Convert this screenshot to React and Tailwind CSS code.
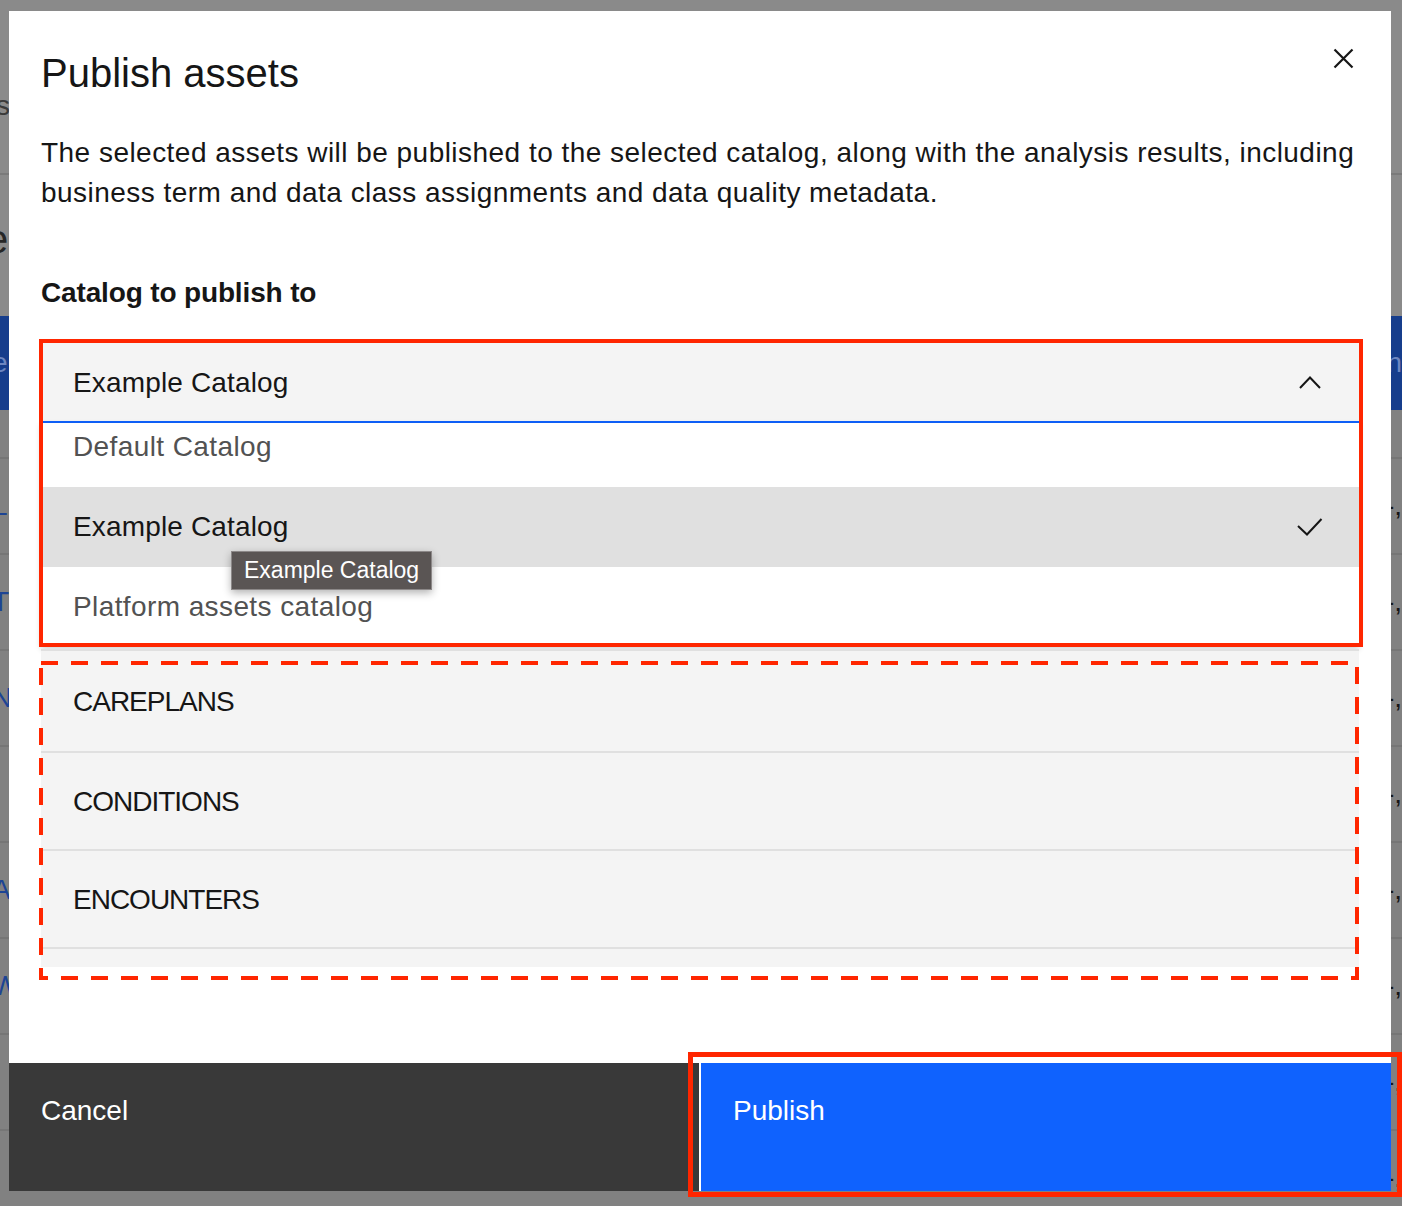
import React from "react";

function CloseIcon() {
  return (
    <svg width="21" height="21" viewBox="0 0 21 21" fill="none">
      <path d="M1.5 1.5L19.5 19.5M19.5 1.5L1.5 19.5" stroke="#161616" strokeWidth="2.2" />
    </svg>
  );
}

function ChevronUp() {
  return (
    <svg width="22" height="13" viewBox="0 0 22 13" fill="none">
      <polyline points="1,12 11,1.5 21,12" stroke="#161616" strokeWidth="2" fill="none" />
    </svg>
  );
}

function Check() {
  return (
    <svg width="26" height="18" viewBox="0 0 26 18" fill="none">
      <polyline points="1,8 10,16.5 24.5,1" stroke="#161616" strokeWidth="2" fill="none" />
    </svg>
  );
}

function Background() {
  const rows = ["L", "T", "N", "I", "A", "W", "I", "I"];
  return (
    <div className="flex flex-col">
      <div className="h-[175px] border-b-2 border-[#7a7a7a]">
        <div className="-ml-[4px] pt-[88px] text-[28px] leading-[36px] text-[#3a3a3a]">si</div>
      </div>
      <div className="h-[141px]">
        <div className="-ml-[14px] pt-[40px] text-[40px] leading-[48px] text-[#262626]">e</div>
      </div>
      <div className="flex h-[94px] items-center justify-between bg-[#163d8c] text-[28px]">
        <span className="-ml-[8px] text-[#6d86c0]">e</span>
        <span className="text-[#6d86c0]">n</span>
      </div>
      <div className="h-[49px] border-b-2 border-[#767676] bg-[#818181]" />
      {rows.map((r, i) => (
        <div
          key={i}
          className="flex h-[96px] items-center justify-between border-b-2 border-[#767676] bg-[#818181] text-[28px]"
        >
          <span className="-ml-[8px] text-[#1d4494]">{r}</span>
          <span className="text-[#161616]">-,</span>
        </div>
      ))}
    </div>
  );
}

export default function App() {
  return (
    <div className="relative h-[1206px] w-[1402px] overflow-hidden bg-[#8a8a8a] font-['Liberation_Sans',Arial,sans-serif]">
      <Background />

      <div className="absolute left-[9px] top-[11px] flex h-[1180px] w-[1382px] flex-col bg-white">
        <div className="relative px-[32px] pt-[38px]">
          <h1 className="text-[40px] leading-[48px] font-normal text-[#161616]">Publish assets</h1>
          <button className="absolute left-[1324px] top-[37px] flex">
            <CloseIcon />
          </button>
        </div>

        <p className="mt-[36px] px-[32px] text-[28px] leading-[40px] tracking-[0.47px] text-[#161616] whitespace-nowrap">
          The selected assets will be published to the selected catalog, along with the analysis results, including
          <br />
          business term and data class assignments and data quality metadata.
        </p>

        <div className="mt-[60px] px-[32px] text-[28px] leading-[40px] font-bold tracking-[-0.15px] text-[#161616]">
          Catalog to publish to
        </div>

        <div className="relative mx-[32px] mt-[28px]">
          <div className="flex h-[82px] items-center justify-between border-b-2 border-[#0f62fe] bg-[#f4f4f4] pl-[32px] pr-[38px] pt-[3px] text-[28px] tracking-[0.15px] text-[#161616]">
            <span>Example Catalog</span>
            <ChevronUp />
          </div>
          <div className="h-[224px] overflow-hidden bg-white shadow-[0_2px_6px_rgba(0,0,0,0.2)]">
            <div className="-mt-[16px] flex flex-col text-[28px] tracking-[0.4px]">
              <div className="flex h-[80px] items-center px-[32px] text-[#525252]">Default Catalog</div>
              <div className="flex h-[80px] items-center justify-between bg-[#e0e0e0] pl-[32px] pr-[36px] text-[#161616]">
                <span className="tracking-[0.15px]">Example Catalog</span>
                <Check />
              </div>
              <div className="flex h-[80px] items-center px-[32px] text-[#525252]">Platform assets catalog</div>
            </div>
          </div>

          <div className="absolute left-[190px] top-[210px] flex h-[39px] items-center border border-[#8c8888] bg-[#5a5554] px-[12px] text-[23px] text-white shadow-[0_3px_8px_rgba(0,0,0,0.3)]">
            Example Catalog
          </div>

          <div className="pointer-events-none absolute -left-[2px] -top-[2px] h-[308px] w-[1324px] border-[4px] border-[#ff2600]" />
        </div>

        <div className="relative mx-[32px] mt-[2px]">
          <div className="h-[318px] overflow-hidden border-t-2 border-[#e0e0e0] bg-[#f4f4f4] text-[28px] tracking-[-1px] text-[#161616]">
            <div className="flex h-[102px] items-center border-b-2 border-[#e0e0e0] px-[32px] pt-[2px]">CAREPLANS</div>
            <div className="flex h-[98px] items-center border-b-2 border-[#e0e0e0] px-[32px] pt-[2px]">CONDITIONS</div>
            <div className="flex h-[98px] items-center border-b-2 border-[#e0e0e0] px-[32px] pt-[2px]">ENCOUNTERS</div>
            <div className="flex h-[98px] items-center px-[32px]">MEDICATIONS</div>
          </div>
          <svg
            className="pointer-events-none absolute -left-[2px] top-[12px]"
            width="1320"
            height="319"
            viewBox="0 0 1320 319"
            fill="none"
          >
            <rect x="2" y="2" width="1316" height="315" stroke="#ff2600" strokeWidth="4" strokeDasharray="17 13" />
          </svg>
        </div>

        <div className="flex-1" />

        <div className="flex h-[128px] gap-[2px] bg-white">
          <button className="flex flex-1 items-start self-stretch bg-[#393939] pl-[32px] pt-[28px] text-left text-[28px] leading-[40px] text-white">
            Cancel
          </button>
          <button className="flex flex-1 items-start self-stretch bg-[#0f62fe] pl-[32px] pt-[28px] text-left text-[28px] leading-[40px] text-white">
            Publish
          </button>
        </div>
      </div>

      <div className="pointer-events-none absolute left-[688px] top-[1052px] h-[145px] w-[714px] border-[5px] border-[#ff2600]" />
    </div>
  );
}
